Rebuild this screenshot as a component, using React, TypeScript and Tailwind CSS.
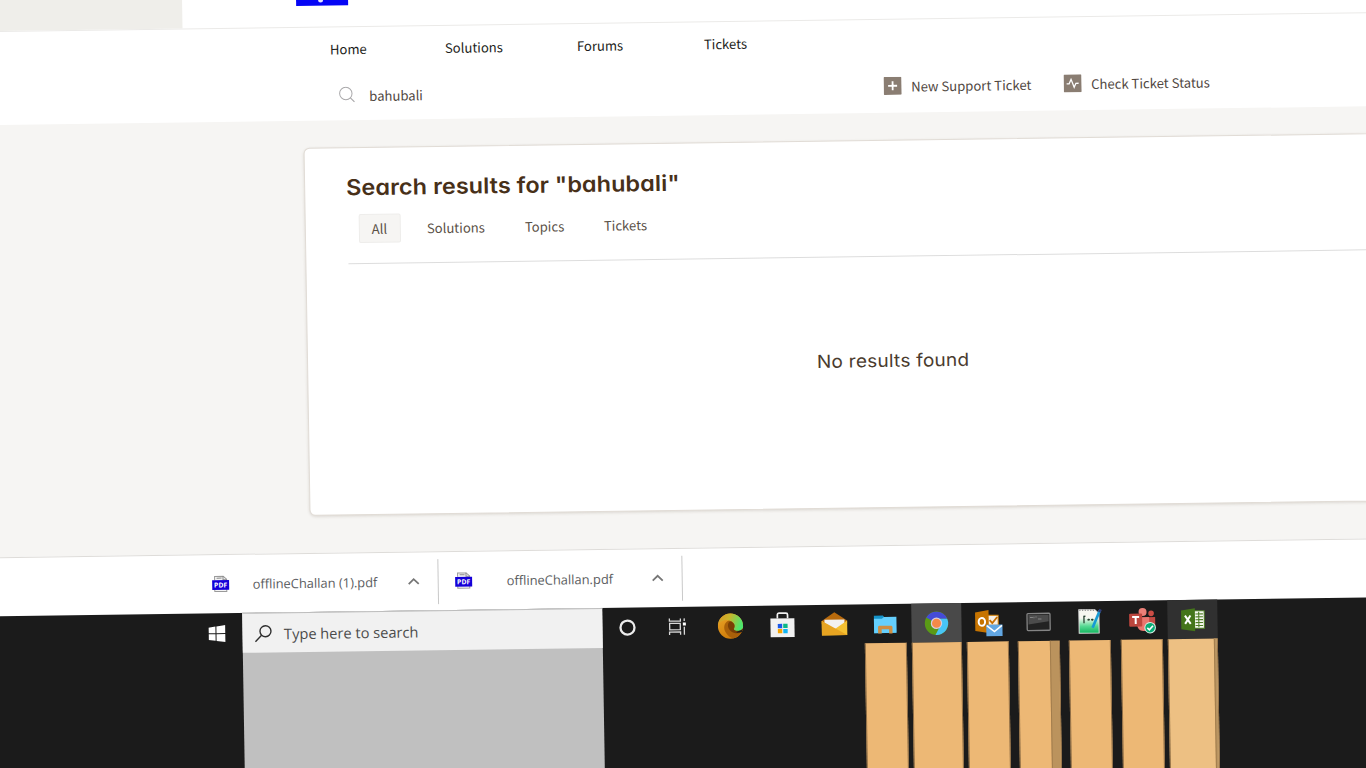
import React from "react";

const sans = "font-['Noto_Sans_CJK_SC',sans-serif]";
const ui = "font-['Open_Sans',sans-serif]";
const display = "font-['Inter',sans-serif] [font-feature-settings:'cv11'_1]";

function PdfIcon() {
  return (
    <svg width="18" height="18" viewBox="0 0 18 18" className="block shrink-0">
      <path d="M3 5V1.2h8.6L15 4.2V6M3 13v3.4h12V13" fill="#f4f4f4" stroke="#9a9a9a" strokeWidth="1" />
      <path d="M5 3h5M11.4 1v3.6H15" fill="none" stroke="#888" strokeWidth="1" />
      <rect x="0.5" y="5" width="17" height="9.8" fill="#1400d8" />
      <text x="9" y="12.400" textAnchor="middle" fontSize="6.800" fontWeight="700" fill="#fff" fontFamily="Open Sans" letterSpacing="0.100">PDF</text>
    </svg>
  );
}

function Download({ name, className, gap }: { name: string; className: string; gap: string }) {
  return (
    <div className={"mt-[6.500px] flex h-[45px] items-center border-r border-[#c9c9c9] " + className}>
      <PdfIcon />
      <span className={ui + " flex-1 whitespace-nowrap text-[12.900px] leading-5 text-[#5b5d61] " + gap}>{name}</span>
      <svg width="14" height="10" viewBox="0 0 14 10" className="mr-[17px] block shrink-0">
        <path d="M2 7.5 7 2.7l5 4.8" fill="none" stroke="#767676" strokeWidth="1.8" />
      </svg>
    </div>
  );
}

const icons = {
  cortana: <circle cx="14" cy="14" r="7" fill="none" stroke="#ececec" strokeWidth="2.300" />,
  taskview: (
    <g fill="none" stroke="#d8d8d8" strokeWidth="1.300">
      <path d="M6 5.600v2.600h11V5.600M6 22v-2.800h11V22M6.200 10.500h10.600v6.400H6.200z" />
      <path d="M20.800 5.600v2.600M20.800 14v8" />
      <path d="M19.400 9.800h3v3h-3z" fill="#fff" stroke="none" />
    </g>
  ),
  edge: (
    <g clipPath="url(#edgeClip)">
      <rect x="1" y="1" width="26" height="26" fill="url(#edgeBase)" />
      <path d="M13.500 8.200C8.500 9 6.500 14.500 8.500 19c2 4.500 6 7.500 11 7.700L27 21l-1-3.500H16z" fill="#a96009" />
      <path d="M15 9c-3.200.6-4 3.500-3.300 6 1.200 4.500 6.800 8 14.300 5l2-2.500-8-3.500z" fill="#7a3f05" />
      <path d="M1 13C3.500 8.300 9.500 6.500 14 8.600c4 1.600 5.200 5.200 3.500 7.700-.9 1.300 1.200 2.600 4.200 2.500 2.800-.2 4.500-1.700 5.300-4V0H1z" fill="url(#edgeTop)" />
      <path d="M22 18.900c2.600-.3 4-1.300 5-3.400v5.200l-2.300 1c.8-1 .5-1.700-.7-1.700-1 .5-3 .8-4.500.5z" fill="#1b1b1b" />
    </g>
  ),
  store: (
    <g>
      <path d="M9 7V3.300c0-1 .7-1.600 1.600-1.600h7c1 0 1.600.7 1.600 1.600V7" fill="none" stroke="#eee" strokeWidth="1.700" />
      <path d="M2 7h24v18.700H2z" fill="#f1f1f1" />
      <path d="M9.300 12.400h4.400v4.300H9.300z" fill="#1958e8" />
      <path d="M14.700 12.400h4.400v4.300h-4.400z" fill="#0bb786" />
      <path d="M9.300 17.600h4.400v4.200H9.300z" fill="#f5a300" />
      <path d="M14.700 17.600h4.400v4.200h-4.400z" fill="#10b4f3" />
    </g>
  ),
  mail: (
    <g transform="translate(1 0)">
      <path d="M1.300 10 14 1.500 26.700 10v3H1.300z" fill="#b86a0c" />
      <path d="M4 9h20v10H4z" fill="#f3f1ef" />
      <path d="M1.300 10 14 18.500 26.700 10v14.500H1.300z" fill="#f5c032" />
      <path d="m1.300 10 25.400 14.500H1.300z" fill="#e7a421" />
    </g>
  ),
  folder: (
    <g transform="translate(-.5 0)">
      <path d="M3 5.500h9l1.500 1.800H25V23H3z" fill="#1593c9" />
      <path d="M3 8.600h8L13 7h12.500v16H3z" fill="#64cffd" />
      <path d="M7 23.500v-6.300c0-1 .7-1.500 1.500-1.500h11.300c.9 0 1.600.6 1.600 1.500v6.300H18v-4.300h-7.400v4.300z" fill="#cf8e42" />
    </g>
  ),
  chrome: (
    <g>
      <circle cx="14" cy="14" r="11.700" fill="#5a9a16" />
      <path d="M14 14 3.900 8.150A11.700 11.700 0 0 1 24.800 9.500L14 9.500z" fill="#454bd8" />
      <path d="M14 9.500h10.800A11.700 11.700 0 0 1 12.800 25.640L18 16z" fill="#48c5f6" />
      <circle cx="14" cy="14" r="5.700" fill="#d6cde0" />
      <circle cx="14" cy="14" r="4.500" fill="#f58a48" />
    </g>
  ),
  outlook: (
    <g transform="translate(1.200 0)">
      <path d="M13 6.700h10.500v10H13z" fill="#f7f0e6" stroke="#d78000" />
      <path d="m15 11.500 2.600 3 5-6" fill="none" stroke="#c96f00" strokeWidth="1.800" />
      <path d="M.500 3.800 14 1.500v23L.500 22.200z" fill="#c77400" />
      <ellipse cx="7.200" cy="13.200" rx="3.200" ry="3.900" fill="none" stroke="#fff" strokeWidth="2" />
      <path d="M11.500 16.200h16.200v11.300H11.500z" fill="#62a7e3" />
      <path d="m12 17 7.600 6 7.600-6" fill="none" stroke="#fff" strokeWidth="1.600" />
    </g>
  ),
  terminal: (
    <g>
      <rect x="2.600" y="5.500" width="23" height="17" rx="1" fill="#222" stroke="#858585" strokeWidth="1.300" />
      <path d="M4 7h20.200v6.500L4 16.500z" fill="#4c4c4c" />
      <path d="M5.500 9.500h3M9.500 8.800v1.500M11 9h1.200M13.500 11H17" stroke="#858585" />
    </g>
  ),
  notepad: (
    <g>
      <path d="M3.500 2.500h16l4 4V26h-20z" fill="url(#noteFill)" stroke="#ddd" strokeWidth="1" />
      <path d="M4 3h15" stroke="#777" strokeWidth="1" strokeDasharray="1.200 1.500" />
      <path d="M8.500 16V9H10M12 12.500h2.400M13.200 11.500v2M15.600 12.500H18M16.800 11.500v2" fill="none" stroke="#26402f" strokeWidth="1.300" />
      <path d="m17 20.500 7.500-17" stroke="#179bd5" strokeWidth="2.700" />
      <path d="m24 5 1.300-2.700" stroke="#314079" strokeWidth="2.700" />
    </g>
  ),
  teams: (
    <g transform="translate(.7 0)">
      <circle cx="14.500" cy="5.500" r="4" fill="#ec8078" />
      <circle cx="23" cy="7" r="2.800" fill="#cc4d45" />
      <path d="M18 10.700h9V18c0 3-2 5-5 5h-4z" fill="#c34b44" />
      <path d="M9 10.700h12V18c0 4-2.500 6.500-6 6.500S9 22 9 18z" fill="#e9766f" />
      <rect x="1" y="7" width="13" height="13" rx="1" fill="#bd463e" />
      <path d="M4 10.400h7M7.500 10.400v7" stroke="#fff" strokeWidth="2" />
      <circle cx="21.800" cy="21.300" r="5.300" fill="#08ac75" stroke="#d9eee6" strokeWidth="1" />
      <path d="m19 21.400 2 2 3.700-4" fill="none" stroke="#fff" strokeWidth="1.600" />
    </g>
  ),
  excel: (
    <g>
      <path d="M15 5h10.800v17.500H15z" fill="#f5f8ef" stroke="#4a7b20" />
      <path d="M17 8.200h7.500M17 11.100h7.500M17 14h7.500M17 16.900h7.500M17 19.800h7.500M20.300 6v15.500" stroke="#4f7d26" strokeWidth="1.100" />
      <path d="M2.700 4.600 16.500 2.500v23L2.700 23.300z" fill="#44751a" />
      <path d="m6.500 9.700 5.700 8.300M12 9.700 6.600 18" stroke="#fff" strokeWidth="2" />
    </g>
  ),
};

const plainApps: { key: keyof typeof icons; w: string }[] = [
  { key: "cortana", w: "w-[50px]" },
  { key: "taskview", w: "w-[50.500px]" },
  { key: "edge", w: "w-[56px]" },
  { key: "store", w: "w-[48px]" },
  { key: "mail", w: "w-[53px]" },
];

const runningApps: { key: keyof typeof icons; w: string; head: string; bar: string; tail?: string }[] = [
  { key: "folder", w: "w-[42px] mr-[5px]", head: "", bar: "bg-[#edb875]" },
  { key: "chrome", w: "w-[50px] mr-[5px]", head: "bg-[#494949]", bar: "bg-[#edb875]" },
  { key: "outlook", w: "w-[42px] mr-[9.500px]", head: "", bar: "bg-[#edb875]" },
  { key: "terminal", w: "w-[42px] mr-[9px]", head: "", bar: "bg-[#edb875]", tail: "w-[9px] bg-[#bb935d]" },
  { key: "notepad", w: "w-[42px] mr-[9.500px]", head: "", bar: "bg-[#edb875]" },
  { key: "teams", w: "w-[42px] mr-[5px]", head: "", bar: "bg-[#edb875]" },
  { key: "excel", w: "w-[50px]", head: "bg-[#303030]", bar: "bg-[#edc083]", tail: "w-[3px] bg-[#b99562]" },
];

function AppIcon({ name }: { name: keyof typeof icons }) {
  return (
    <svg width="28" height="28" viewBox="0 0 28 28" className="block shrink-0 overflow-visible">
      {icons[name]}
    </svg>
  );
}

function Header() {
  return (
    <header className={sans}>
      <div className="flex h-[51.500px] border-b border-[#ebeae8]">
        <div className="w-[202px] bg-[#efeeea]" />
        <div className="ml-[114px] flex h-[30px] w-[52px] items-end justify-center bg-[#0505f5]">
          <div className="mb-[3px] mr-1 h-[8px] w-[5px] rounded-full bg-[#e5e5ff]" />
        </div>
      </div>
      <nav className="flex h-[45px] items-center pl-[349px] text-[13.100px] leading-5 text-[#1c1d20]">
        <a className="w-[115px]">Home</a>
        <a className="w-[132px]">Solutions</a>
        <a className="w-[127px]">Forums</a>
        <a>Tickets</a>
      </nav>
      <div className="flex h-[48.500px] items-center pl-[357px] text-[13.100px] leading-5 text-[#50473f]">
        <svg width="17" height="17" viewBox="0 0 17 17" className="mb-[2px] block shrink-0">
          <circle cx="7.200" cy="7.200" r="6.200" fill="none" stroke="#a9a8aa" strokeWidth="1" />
          <path d="m11.700 11.700 4 4" stroke="#a9a8aa" strokeWidth="1.200" />
        </svg>
        <span className="ml-[13.500px] w-[514px]">bahubali</span>
        <div className="mb-[4.500px] flex items-center">
          <svg width="18" height="18" viewBox="0 0 18 18" className="mb-px block shrink-0">
            <rect width="18" height="18" rx="1" fill="#8a7d72" />
            <path d="M9 4.500v9M4.500 9h9" stroke="#fff" strokeWidth="1.800" />
          </svg>
          <span className="ml-[10px] w-[152px] whitespace-nowrap">New Support Ticket</span>
          <svg width="18" height="18" viewBox="0 0 18 18" className="mb-px block shrink-0">
            <rect width="18" height="18" rx="1" fill="#8a7d72" />
            <path d="M3 9.500h2.500L7.500 5l3 8 1.800-4H15" fill="none" stroke="#fff" strokeWidth="1.300" />
          </svg>
          <span className="ml-[10px] whitespace-nowrap">Check Ticket Status</span>
        </div>
      </div>
    </header>
  );
}

function Results() {
  return (
    <main className="h-[432px] bg-[#f6f5f3] pl-[321px] pt-[27px]">
      <section className="h-[367.500px] w-[1172px] rounded-[6px] border border-[#e1dcd6] bg-white pl-[42px] shadow-[0_1px_3px_rgba(80,60,40,0.16)]">
        <h1 className={display + " -ml-px mt-[23px] w-fit origin-left scale-x-[1.065] whitespace-nowrap text-[22px] font-semibold leading-8 tracking-[0.060px] text-[#473019]"}>
          Search results for "bahubali"
        </h1>
        <div className={sans + " mt-[11px] flex h-[29px] items-center pl-[10.500px] text-[13.100px] leading-5 text-[#5a5046]"}>
          <a className="flex h-[29px] w-[42px] items-center justify-center rounded-[2px] border border-[#eeedeb] bg-[#f6f5f3]">All</a>
          <a className="ml-[26.500px] w-[98px]">Solutions</a>
          <a className="w-[79px]">Topics</a>
          <a>Tickets</a>
        </div>
        <div className="mt-[19.500px] h-px bg-[#dddddd]" />
        <p className={display + " mt-[90px] w-[1086px] scale-x-[1.060] whitespace-nowrap text-center text-[18px] leading-7 tracking-[0.200px] text-[#4a3b2e]"}>
          No results found
        </p>
      </section>
    </main>
  );
}

function Taskbar() {
  return (
    <div className="flex h-[220px] bg-[#1b1b1b]">
      <div className="flex h-[41px] w-[252px] items-center justify-end pr-[17px]">
        <svg width="17" height="17" viewBox="0 0 17 17" className="block">
          <path d="M0 2.400 7 1.400V8H0zM8 1.200 17 0v8H8zM0 9h7v6.600l-7-1zM8 9h9v8l-9-1.200z" fill="#fff" />
        </svg>
      </div>
      <div className="w-[359.500px] bg-[#c0c0c0]">
        <div className="flex h-[40px] items-center border-t border-[#bdbdbd] bg-[#f1f1f1] pl-[12px]">
          <svg width="18" height="18" viewBox="0 0 18 18" className="block shrink-0">
            <circle cx="11" cy="6.700" r="5.500" fill="none" stroke="#2e2e2e" strokeWidth="1.400" />
            <path d="M7 10.800.800 17" stroke="#2e2e2e" strokeWidth="1.400" />
          </svg>
          <span className={ui + " ml-[11.500px] whitespace-nowrap text-[14.600px] leading-6 text-[#4b4b4b]"}>Type here to search</span>
        </div>
      </div>
      <div className="flex h-[40px] items-center">
        {plainApps.map((a) => (
          <div key={a.key} className={"flex justify-center " + a.w}>
            <AppIcon name={a.key} />
          </div>
        ))}
      </div>
      <div className="ml-[4.500px] flex">
        {runningApps.map((a) => (
          <div key={a.key} className={"flex flex-col " + a.w}>
            <div className={"flex h-[38.500px] items-center justify-center pt-[1.500px] " + a.head}>
              <AppIcon name={a.key} />
            </div>
            <div className={"flex flex-1 justify-end border-x border-[#8f6e46] " + a.bar}>
              {a.tail ? <div className={"border-l border-[#a27d4d] " + a.tail} /> : null}
            </div>
          </div>
        ))}
      </div>
    </div>
  );
}

export default function App() {
  return (
    <div className="h-[768px] w-[1366px] overflow-hidden bg-white">
      <svg width="0" height="0" className="absolute">
        <defs>
          <clipPath id="edgeClip">
            <circle cx="14" cy="14" r="12.600" />
          </clipPath>
          <linearGradient id="edgeBase" x1="0" y1="0" x2="0.500" y2="1">
            <stop offset="0.300" stopColor="#e39a20" />
            <stop offset="1" stopColor="#cd7a08" />
          </linearGradient>
          <linearGradient id="edgeTop" x1="0" y1="0" x2="1" y2="0.300">
            <stop offset="0" stopColor="#dc9226" />
            <stop offset="0.500" stopColor="#c9b52b" />
            <stop offset="1" stopColor="#4fe56c" />
          </linearGradient>
          <linearGradient id="noteFill" x1="0" y1="0" x2="0" y2="1">
            <stop offset="0.350" stopColor="#f7f7f0" />
            <stop offset="0.700" stopColor="#55d992" />
            <stop offset="1" stopColor="#12b45d" />
          </linearGradient>
        </defs>
      </svg>
      <div className="-ml-5 -mt-5 w-[1420px] bg-white [transform-origin:20px_20px] [transform:matrix(1,-0.0137,0.0165,1,0,0)]">
        <Header />
        <Results />
        <div className="flex h-[59px] border-t border-[#dedcd9] bg-white pl-[221.500px]">
          <Download name="offlineChallan (1).pdf" className="w-[227.500px]" gap="ml-[23.500px]" />
          <Download name="offlineChallan.pdf" className="w-[244px] pl-[16px]" gap="ml-[34px]" />
        </div>
        <Taskbar />
      </div>
    </div>
  );
}
